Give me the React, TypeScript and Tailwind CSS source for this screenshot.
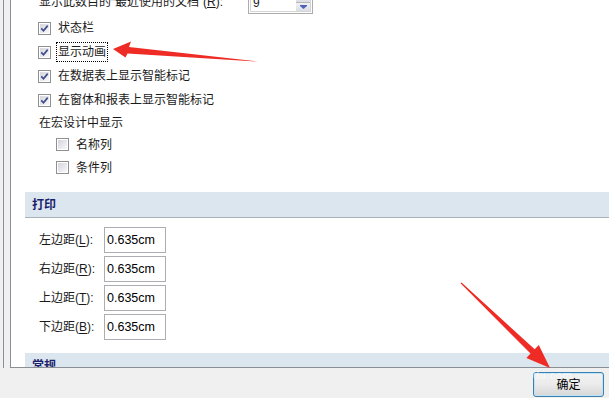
import React from "react";

function Check({ checked }: { checked?: boolean }) {
  return (
    <span className="w-[13px] h-[13px] border border-[#8f8f8f] bg-white p-px shrink-0 flex">
      <span className="flex-1 bg-linear-to-br from-[#d4d6dc] to-[#f8f8fa] flex items-center justify-center">
        {checked && (
          <svg width="9" height="9" viewBox="0 0 9 9">
            <path d="M1.3 4.4 L3.5 6.8 L7.7 1.6" fill="none" stroke="#3f4d8c" strokeWidth="1.7" />
          </svg>
        )}
      </span>
    </span>
  );
}

function CheckRow({ label, checked, indent, focus, h }: { label: string; checked?: boolean; indent: string; focus?: boolean; h: string }) {
  return (
    <div className={`flex items-center gap-[7px] ${indent} ${h}`}>
      <Check checked={checked} />
      {focus ? (
        <span className="-ml-[2px] border border-dotted border-black px-px leading-[18px]">{label}</span>
      ) : (
        <span className="leading-[18px]">{label}</span>
      )}
    </div>
  );
}

function MarginRow({ label, key2 }: { label: string; key2: string }) {
  return (
    <div className="flex items-center h-[26px] pl-[28px]">
      <span className="w-[65px] whitespace-nowrap">
        {label}(<span className="underline underline-offset-2">{key2}</span>):
      </span>
      <div className="w-[62px] h-[26px] border border-[#abadb3] flex items-center pl-[2px] text-[12.5px] text-black">
        0.635cm
      </div>
    </div>
  );
}

export default function App() {
  return (
    <div className="w-[609px] h-[398px] bg-[#f0f0f0] relative overflow-hidden font-['Liberation_Sans','Noto_Sans_CJK_SC',sans-serif] text-[12px] text-[#1a1a1a]">
      <div className="flex h-[368px]">
        <div className="w-[3px]" />
        <div className="w-px bg-[#8c8e96]" />
        <div className="w-[6px]" />
        <div className="flex-1 bg-white border-l border-b border-[#8c8e96] overflow-hidden flex flex-col">
          {/* top row (cut) */}
          <div className="-mt-[9px] h-[22px] flex items-center pl-[28px] shrink-0">
            <span className="w-[209px] whitespace-nowrap">
              显示此数目的“最近使用的文档”(<span className="underline">R</span>):
            </span>
            <div className="w-[65px] h-[23px] border border-[#acacac] p-px flex">
              <div className="flex-1 border border-[#d6d6d6] flex">
                <span className="flex-1 pl-[2px] leading-[18px]">9</span>
                <div className="w-[14px] flex flex-col">
                  <div className="flex-1 bg-linear-to-b from-[#f2f2f2] to-[#dcdde3] border-b border-[#b8b8b8] flex items-center justify-center">
                    <svg width="7" height="4" viewBox="0 0 7 4"><path d="M0 4 L3.5 0 L7 4 Z" fill="#4d63b8" /></svg>
                  </div>
                  <div className="flex-1 bg-linear-to-b from-[#f2f2f4] to-[#dcdde3] flex items-center justify-center">
                    <svg width="7" height="4" viewBox="0 0 7 4"><path d="M0 0 H7 V1 L3.5 4 L0 1 Z" fill="#4d63b8" /></svg>
                  </div>
                </div>
              </div>
            </div>
          </div>

          <div className="mt-[3px] flex flex-col shrink-0">
            <CheckRow label="状态栏" checked indent="pl-[27px]" h="h-[24px]" />
            <CheckRow label="显示动画" checked focus indent="pl-[27px]" h="h-[24px]" />
            <CheckRow label="在数据表上显示智能标记" checked indent="pl-[27px]" h="h-[24px]" />
            <CheckRow label="在窗体和报表上显示智能标记" checked indent="pl-[27px]" h="h-[24px]" />
            <div className="h-[21px] flex items-center pl-[28px]">在宏设计中显示</div>
            <CheckRow label="名称列" indent="pl-[45px]" h="h-[23px]" />
            <CheckRow label="条件列" indent="pl-[45px]" h="h-[23px]" />
          </div>

          <div className="mt-[13px] ml-[14px] h-[26px] shrink-0 bg-[#dce6ee] border-b border-[#aab1ba] flex items-center pl-[7px] font-bold text-[#1b1f6e]">
            打印
          </div>

          <div className="mt-[9px] flex flex-col gap-[3px] shrink-0">
            <MarginRow label="左边距" key2="L" />
            <MarginRow label="右边距" key2="R" />
            <MarginRow label="上边距" key2="T" />
            <MarginRow label="下边距" key2="B" />
          </div>

          <div className="mt-[13px] ml-[14px] h-[26px] shrink-0 bg-[#dce6ee] border-b border-[#aab1ba] flex items-center pl-[7px] font-bold text-[#1b1f6e]">
            常规
          </div>
        </div>
      </div>

      <div className="flex justify-end pr-[5px] pt-[4px]">
        <button className="w-[71px] h-[25px] rounded-[3px] border border-[#3c7fb1] bg-linear-to-b from-[#f2f2f2] via-[#ebebeb] to-[#d6d6d6] shadow-[inset_0_0_0_1px_#bfe3f7] text-black text-[12px] leading-none">
          确定
        </button>
      </div>

      <span className="absolute left-[533px] top-[367px] text-[11px] text-white/60 pointer-events-none tracking-[0.5px]">
        du.com
      </span>

      <svg className="absolute inset-0 pointer-events-none" width="609" height="398" viewBox="0 0 609 398">
        <polygon points="113,49 131,41.5 129,47 258,61.5 127.5,53.5 125.5,57.5" fill="#ee2b25" />
        <polygon points="550,368 526.4,357.9 530.5,353.6 460.5,283.2 461.5,282.6 534.7,349.2 538.8,344.9" fill="#ee2b25" />
      </svg>
    </div>
  );
}
